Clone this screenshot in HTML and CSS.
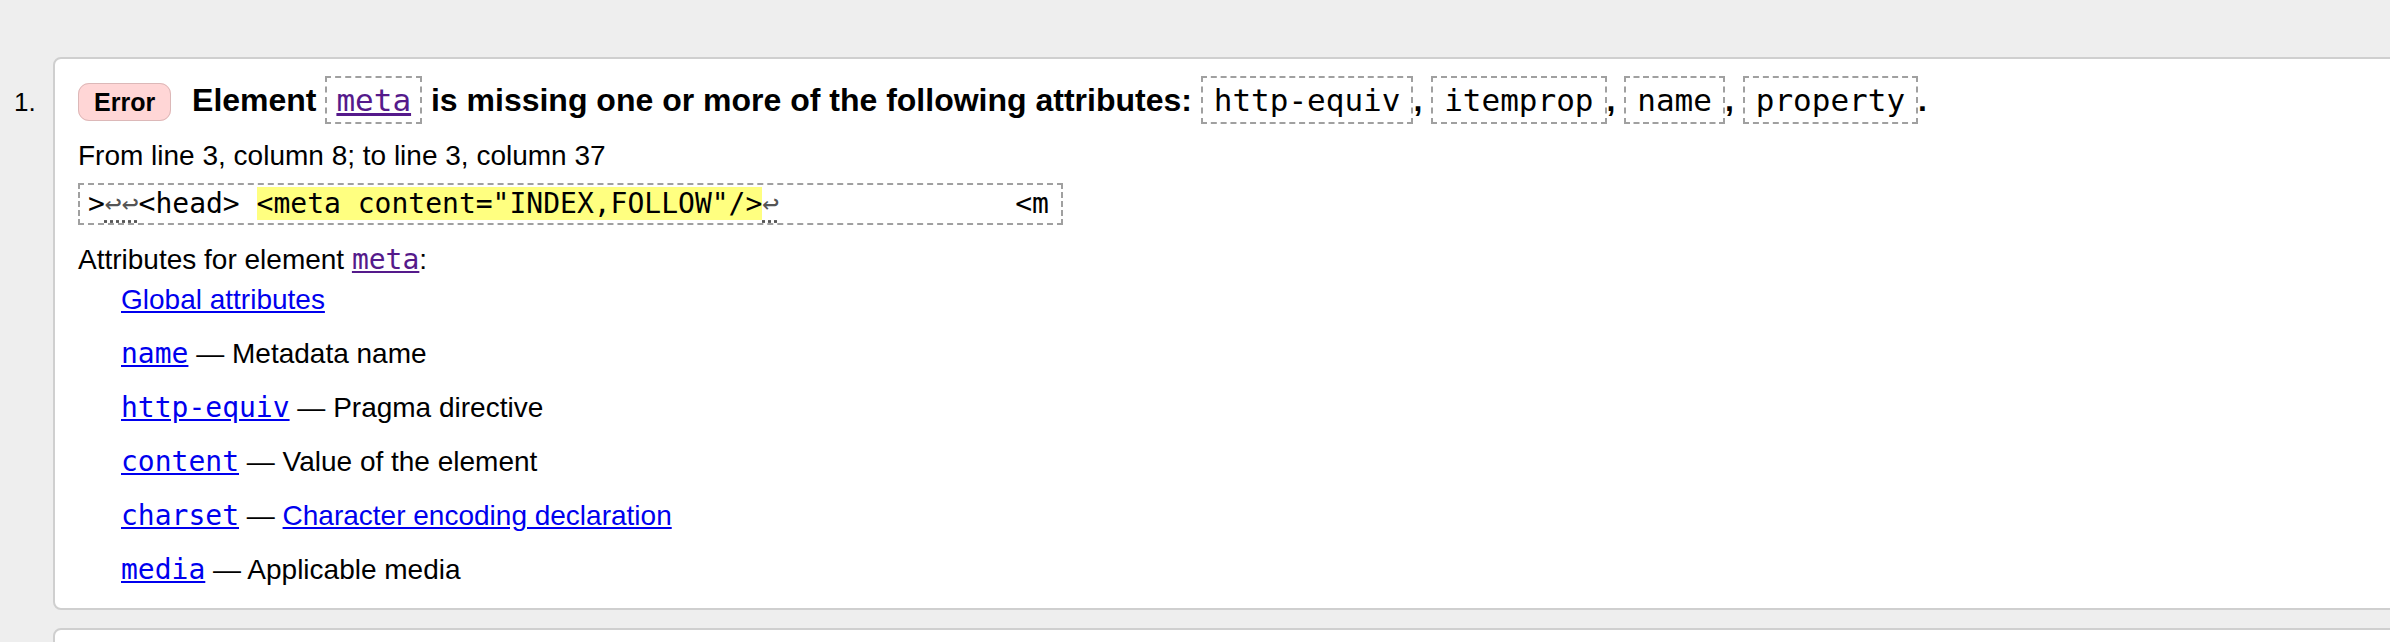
FILE: index.html
```html
<!DOCTYPE html>
<html lang="en">
<head>
<meta charset="utf-8">
<title>Validation results</title>
<link rel="stylesheet" href="styles.css">
</head>
<body>
<ol class="results">
  <li class="item">
    <span class="num">1.</span>
    <div class="card">
      <p class="msg"><strong class="badge">Error</strong> Element <code class="tok tok-link"><a class="visited" href="#meta">meta</a></code> is missing one or more of the following attributes: <code class="tok">http-equiv</code>, <code class="tok">itemprop</code>, <code class="tok">name</code>, <code class="tok">property</code>.</p>
      <p class="location">From line 3, column 8; to line 3, column 37</p>
      <p class="extract"><code class="snippet">&gt;<abbr class="lf" title="line feed">↩↩</abbr>&lt;head&gt; <b class="hl">&lt;meta content="INDEX,FOLLOW"/&gt;</b><abbr class="lf" title="line feed">↩</abbr>              &lt;m</code></p>
      <dl class="attrs">
        <dt>Attributes for element <code class="mono"><a class="visited" href="#meta">meta</a></code>:</dt>
        <dd class="first"><a href="#global">Global attributes</a></dd>
        <dd><code class="mono"><a href="#name">name</a></code> — Metadata name</dd>
        <dd><code class="mono"><a href="#http-equiv">http-equiv</a></code> — Pragma directive</dd>
        <dd><code class="mono"><a href="#content">content</a></code> — Value of the element</dd>
        <dd><code class="mono"><a href="#charset">charset</a></code> — <a href="#charset-decl">Character encoding declaration</a></dd>
        <dd><code class="mono"><a href="#media">media</a></code> — Applicable media</dd>
      </dl>
    </div>
  </li>
  <li class="item">
    <span class="num"></span>
    <div class="card card-next"></div>
  </li>
</ol>
</body>
</html>
```
FILE: styles.css
```css
html, body {
  margin: 0;
  padding: 0;
  overflow: hidden;
}

body {
  background: #eeeeee;
  font-family: "Liberation Sans", Arial, Helvetica, sans-serif;
  font-size: 28px;
  color: #000;
}

a {
  color: #0000ee;
  text-decoration: underline;
}

a.visited {
  color: #551a8b;
}

.results {
  list-style: none;
  margin: 0;
  padding: 57px 0 0 0;
}

.item {
  display: grid;
  grid-template-columns: 53px 2400px;
  align-items: baseline;
  margin-bottom: 18px;
}

.num {
  font-size: 26px;
  padding-left: 14px;
}

.card {
  box-sizing: border-box;
  background: #fff;
  border: 2px solid #cfcfcf;
  border-radius: 8px;
  padding: 21px 0 22px 23px;
}

.card-next {
  min-height: 140px;
}

.msg {
  margin: 0;
  font-size: 32px;
  line-height: 40px;
  font-weight: bold;
  white-space: nowrap;
}

.badge {
  font-size: 25px;
  font-weight: bold;
  background: #ffd6d6;
  border: 1px solid #dcb8b8;
  border-radius: 11px;
  padding: 4px 15px;
  margin-right: 12px;
}

.tok {
  font-family: "DejaVu Sans Mono", monospace;
  font-size: 31px;
  font-weight: normal;
  border: 2px dashed #a0a0a0;
  padding: 4px 11px;
}

.tok-link {
  padding: 4px 9px;
}

.location {
  margin: 18px 0 0;
  line-height: 32px;
}

.extract {
  display: flex;
  margin: 11px 0 0;
}

.snippet {
  flex: none;
  font-family: "DejaVu Sans Mono", monospace;
  font-size: 28px;
  line-height: 38px;
  white-space: pre;
  border: 2px dashed #a0a0a0;
  padding: 0 12px 0 8px;
}

.hl {
  font-weight: normal;
  background: #ffff80;
}

.lf {
  color: #555;
  text-decoration: underline dotted;
  text-underline-offset: 7px;
}

.attrs {
  margin: 19px 0 0;
  line-height: 32px;
}

.attrs dt {
  margin: 0;
}

.attrs dd {
  margin: 22px 0 0 43px;
}

.attrs dd.first {
  margin-top: 8px;
}

.mono {
  font-family: "DejaVu Sans Mono", monospace;
  font-size: 28px;
}
```
